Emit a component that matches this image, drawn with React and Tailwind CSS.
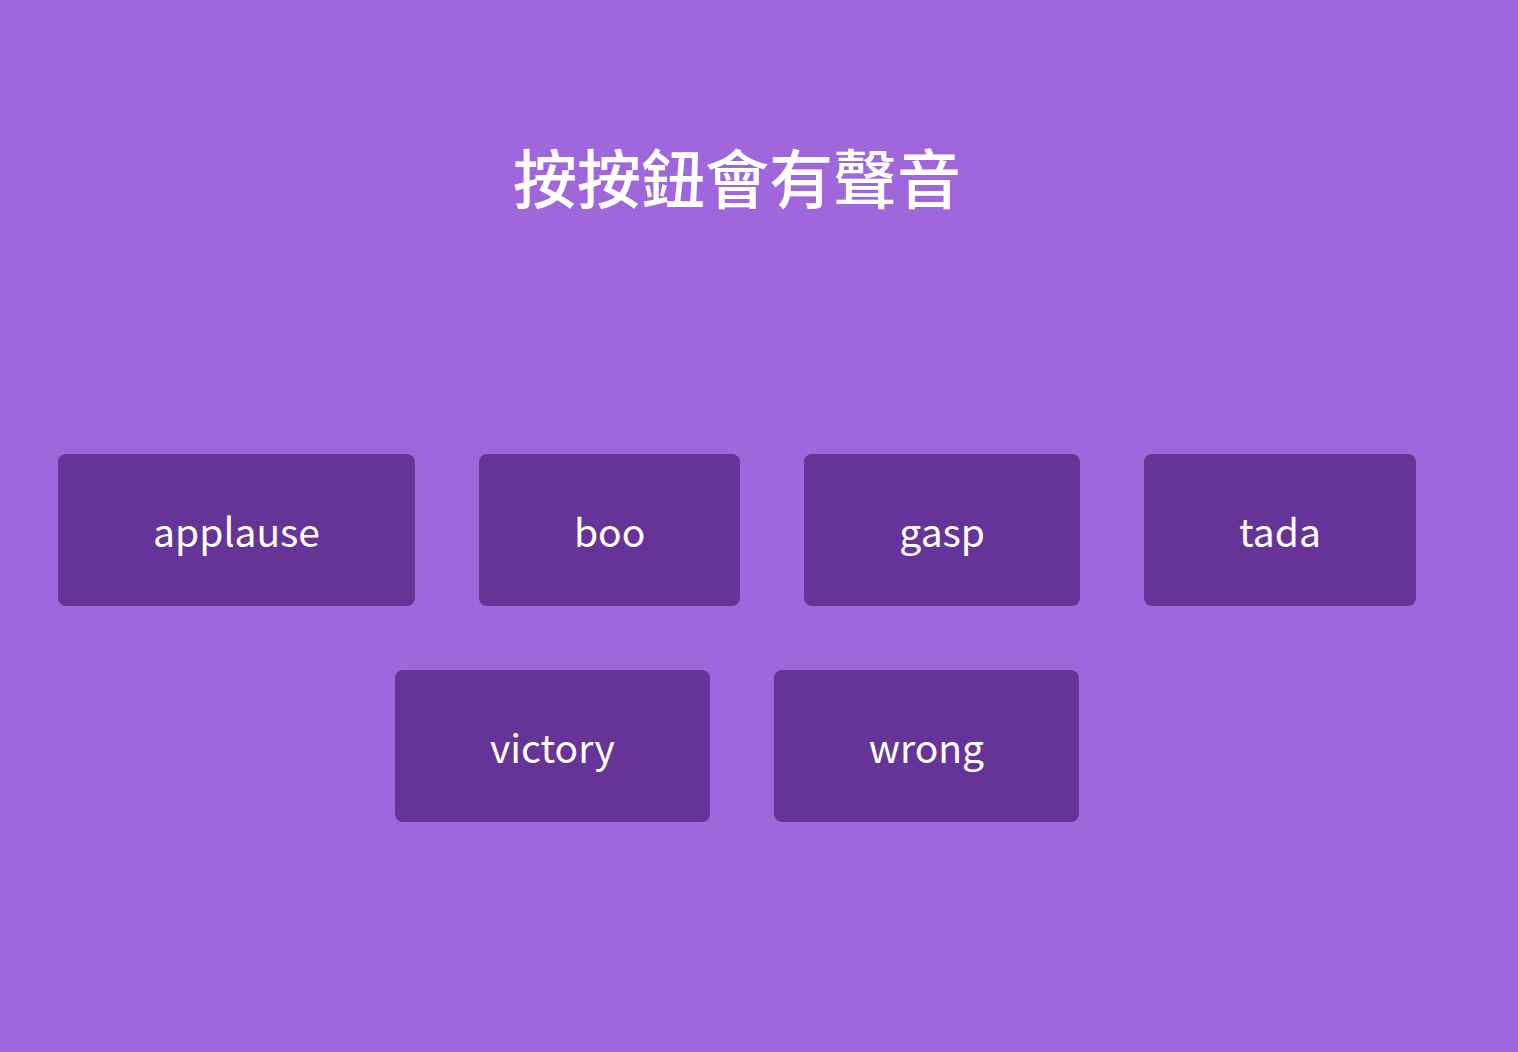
const sounds = ['applause', 'boo', 'gasp', 'tada', 'victory', 'wrong']

export default function App() {
  return (
    <div
      className="min-h-[1052px] bg-[#a067dd] pr-[44px] text-white"
      style={{ fontFamily: '"Noto Sans CJK TC", "Noto Sans", sans-serif' }}
    >
      <h1 className="pt-[137px] text-center text-[64px] font-medium leading-[77px]">按按鈕會有聲音</h1>
      <div className="mx-auto mt-[208px] flex max-w-[1440px] flex-wrap justify-center">
        {sounds.map((name) => (
          <button
            key={name}
            className="m-8 flex h-[152px] items-center rounded-lg bg-[#663399] px-[95px] text-[39px] leading-none text-white"
          >
            {name}
          </button>
        ))}
      </div>
    </div>
  )
}
